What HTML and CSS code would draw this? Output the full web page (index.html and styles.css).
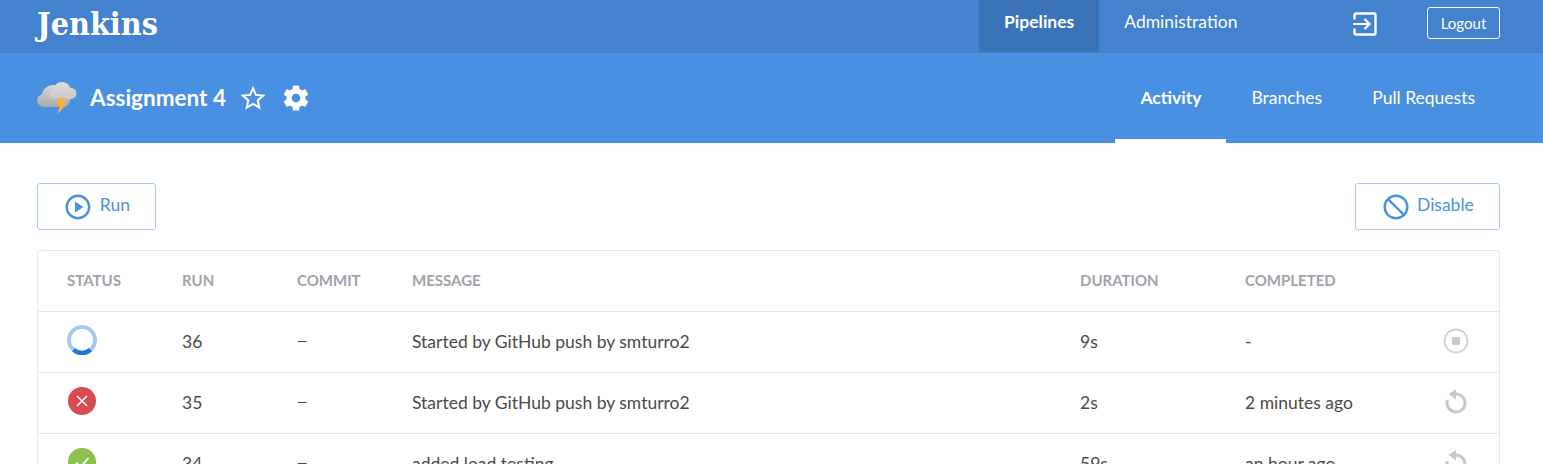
FILE: index.html
```html
<!DOCTYPE html>
<html lang="en">
<head>
<meta charset="utf-8">
<title>Assignment 4 - Jenkins</title>
<link rel="stylesheet" href="styles.css">
</head>
<body>
<header class="topbar">
  <div class="brand">Jenkins</div>
  <nav class="topnav">
    <a class="topnav-item is-active">Pipelines</a>
    <a class="topnav-item">Administration</a>
  </nav>
  <svg class="exit-icon" width="24" height="24" viewBox="0 0 24 24"><path d="M1.500 7.500V3A1.500 1.500 0 0 1 3 1.500h18A1.500 1.500 0 0 1 22.500 3v18a1.500 1.500 0 0 1-1.500 1.500H3A1.500 1.500 0 0 1 1.500 21v-4.500" fill="none" stroke="#fff" stroke-width="2.400"/><path d="M0 12h16M11.500 7l5 5-5 5" fill="none" stroke="#fff" stroke-width="2.200"/></svg>
  <a class="logout">Logout</a>
</header>
<section class="subheader">
  <svg class="weather" width="40" height="32" viewBox="0 0 40 32">
    <defs>
      <linearGradient id="cloudBack" x1="0" y1="0" x2="0" y2="1"><stop offset="0" stop-color="#d8d8d8"/><stop offset="1" stop-color="#a8a8a8"/></linearGradient>
      <linearGradient id="cloudFront" x1="0" y1="0" x2="0" y2="1"><stop offset="0" stop-color="#dedede"/><stop offset="1" stop-color="#c9c9c9"/></linearGradient>
    </defs>
    <path d="M6.500 25a6.500 6.500 0 0 1-1.500-12.800C6 7 10.500 3 16 3c5 0 9 3 10.500 7.500 4 .6 6.500 3.500 6.500 7.200 0 4-3 7.300-7 7.300z" fill="url(#cloudBack)"/>
    <path d="M17.500 17a4.500 4.500 0 0 1-1.500-8.700C16.800 3.500 20.500 0 25 0c4 0 7 2.300 8.300 5.700 3.500.3 6.200 2.500 6.200 5.700 0 3-2.500 5.600-6 5.600z" fill="url(#cloudFront)"/>
    <path d="M21 16h8.500l-3.200 6H30l-9.500 10 2.500-8.500h-3.500z" fill="#f5b041"/>
  </svg>
  <h1 class="title">Assignment 4</h1>
  <svg class="star" width="26" height="26" viewBox="0 0 26 26"><path d="M13 3.200l2.900 6.700 7.300.7-5.500 4.800 1.600 7.200-6.300-3.800-6.300 3.800 1.600-7.200-5.500-4.800 7.300-.7z" fill="none" stroke="#fff" stroke-width="2"/></svg>
  <svg class="gear" width="30" height="30" viewBox="0 0 24 24"><path fill="#fff" d="M19.430 12.980c.04-.32.070-.64.070-.98s-.03-.66-.07-.98l2.110-1.650c.19-.15.240-.42.120-.64l-2-3.460c-.12-.22-.39-.3-.61-.22l-2.490 1c-.52-.4-1.080-.73-1.690-.98l-.38-2.650C14.460 2.180 14.250 2 14 2h-4c-.25 0-.46.18-.49.42l-.38 2.650c-.61.25-1.170.59-1.690.98l-2.490-1c-.23-.09-.49 0-.61.220l-2 3.460c-.13.220-.07.490.12.640l2.110 1.650c-.04.320-.07.650-.07.980s.03.660.07.980l-2.110 1.650c-.19.150-.24.420-.12.640l2 3.460c.12.220.39.300.61.220l2.490-1c.52.400 1.080.730 1.690.980l.38 2.650c.03.240.24.420.49.420h4c.25 0 .46-.18.49-.42l.38-2.650c.61-.25 1.170-.59 1.690-.98l2.490 1c.23.090.49 0 .61-.22l2-3.460c.12-.22.070-.49-.12-.64l-2.110-1.650zM12 15.500c-1.930 0-3.500-1.570-3.500-3.500s1.570-3.500 3.500-3.500 3.500 1.570 3.500 3.500-1.570 3.500-3.500 3.500z"/></svg>
  <nav class="tabs">
    <a class="tab is-active">Activity</a>
    <a class="tab">Branches</a>
    <a class="tab">Pull Requests</a>
  </nav>
</section>
<main class="content">
  <div class="actions">
    <button class="btn btn-run">
      <svg width="26" height="26" viewBox="0 0 26 26"><circle cx="13" cy="13" r="11.300" fill="none" stroke="#4a90e2" stroke-width="2.400"/><path d="M10 7.500l8.500 5.500-8.500 5.500z" fill="#4a90e2"/></svg>
      <span>Run</span>
    </button>
    <button class="btn btn-disable">
      <svg width="26" height="26" viewBox="0 0 26 26"><circle cx="13" cy="13" r="11.300" fill="none" stroke="#4a90e2" stroke-width="2.400"/><path d="M5 5l16 16" stroke="#4a90e2" stroke-width="2.400"/></svg>
      <span>Disable</span>
    </button>
  </div>
  <div class="runs">
    <div class="row row-head">
      <div>Status</div><div>Run</div><div>Commit</div><div>Message</div><div>Duration</div><div>Completed</div><div></div>
    </div>
    <div class="row">
      <div class="status status-running"><svg width="30" height="30" viewBox="0 0 30 30"><circle cx="15" cy="15" r="13" fill="none" stroke="#a6c9f2" stroke-width="4"/><path d="M6.500 24.800A13 13 0 0 0 23.500 24.800" fill="none" stroke="#1f78d1" stroke-width="4.500"/></svg></div>
      <div>36</div><div class="dash">—</div><div>Started by GitHub push by smturro2</div><div>9s</div><div>-</div>
      <div class="action"><svg width="26" height="26" viewBox="0 0 26 26"><circle cx="13" cy="13" r="11.500" fill="none" stroke="#d2d4d9" stroke-width="2"/><rect x="9" y="9" width="8" height="8" rx="1" fill="#c6c8ce"/></svg></div>
    </div>
    <div class="row">
      <div class="status"><svg width="28" height="28" viewBox="0 0 28 28"><circle cx="14" cy="14" r="14" fill="#d54c53"/><path d="M9 9l10 10M19 9L9 19" stroke="#fff" stroke-width="1.500"/></svg></div>
      <div>35</div><div class="dash">—</div><div>Started by GitHub push by smturro2</div><div>2s</div><div>2 minutes ago</div>
      <div class="action"><svg width="26" height="26" viewBox="0 0 26 26"><path d="M13 5A9 9 0 1 1 4.500 11" fill="none" stroke="#c6c8ce" stroke-width="3"/><path d="M13 0v10.500L5.500 5z" fill="#c6c8ce"/></svg></div>
    </div>
    <div class="row">
      <div class="status"><svg width="28" height="28" viewBox="0 0 28 28"><circle cx="14" cy="14" r="14" fill="#8cc04f"/><path d="M8 14.500l4.500 4.500 8-9" fill="none" stroke="#fff" stroke-width="1.800"/></svg></div>
      <div>34</div><div class="dash">—</div><div>added load testing</div><div>59s</div><div>an hour ago</div>
      <div class="action"><svg width="26" height="26" viewBox="0 0 26 26"><path d="M13 5A9 9 0 1 1 4.500 11" fill="none" stroke="#c6c8ce" stroke-width="3"/><path d="M13 0v10.500L5.500 5z" fill="#c6c8ce"/></svg></div>
    </div>
  </div>
</main>
</body>
</html>
```
FILE: styles.css
```css
* { box-sizing: border-box; }
html, body { margin: 0; height: 100%; overflow: hidden; }
body { font-family: Lato, "Noto Sans", sans-serif; color: #4a4a4a; background: #fff; font-size: 17.5px; }

.topbar { height: 53px; background: #4382ce; display: flex; align-items: flex-start; padding: 0 43px 0 37px; color: #fff; }
.brand { font-family: "DejaVu Serif", serif; font-stretch: condensed; font-weight: 700; font-size: 32px; line-height: 48px; width: 942px; }
.topnav { display: flex; width: 374px; }
.topnav-item { height: 52px; line-height: 43px; padding: 0 25px; font-size: 17.5px; }
.topnav-item.is-active { background: #3b73b8; font-weight: 700; }
.exit-icon { margin-top: 12px; flex: none; }
.logout { margin: 7px 0 0 50px; width: 73px; height: 32px; border: 1px solid #fff; border-radius: 3px; font-size: 15px; line-height: 30px; text-align: center; }

.subheader { height: 90px; background: #4a90e2; display: flex; align-items: center; padding: 0 43px 0 37px; color: #fff; }
.weather { flex: none; margin-right: 13px; }
.title { margin: 0 14px 0 0; font-size: 22.5px; font-weight: 700; line-height: 30px; }
.star { flex: none; margin-right: 16px; }
.gear { flex: none; margin-left: -1px; }
.tabs { margin-left: auto; display: flex; align-self: stretch; }
.tab { padding: 0 25px; line-height: 90px; height: 90px; font-size: 17.5px; border-bottom: 4px solid transparent; }
.tab.is-active { font-weight: 700; border-bottom-color: #fff; }

.content { padding: 40px 43px 0 37px; }
.actions { display: flex; justify-content: space-between; margin-bottom: 20px; }
.btn { height: 47px; display: flex; align-items: center; gap: 8px; padding: 0 25px 0 27px; background: #fff; border: 1px solid #a9c8ee; border-radius: 3px; color: #4a90e2; font: inherit; font-size: 17.5px; }
.btn span { position: relative; top: -2px; }
.btn-run { width: 119px; gap: 9px; }
.btn-disable { width: 145px; }

.runs { border: 1px solid #e9e9ec; border-bottom: 0; border-radius: 4px 4px 0 0; }
.row { display: grid; grid-template-columns: 115px 115px 115px 668px 165px 1fr 56px; padding-left: 29px; padding-bottom: 2px; height: 61px; align-items: center; border-bottom: 1px solid #e9e9ec; font-size: 17.5px; color: #4a4a4a; }
.row-head { font-size: 15px; font-weight: 700; color: #a0a3a9; text-transform: uppercase; }
.dash { font-size: 13px; }
.status { display: flex; }
.status svg { margin: -2px 0 0 1px; }
.status-running svg { margin-left: 0; }
.action { display: flex; }
```
